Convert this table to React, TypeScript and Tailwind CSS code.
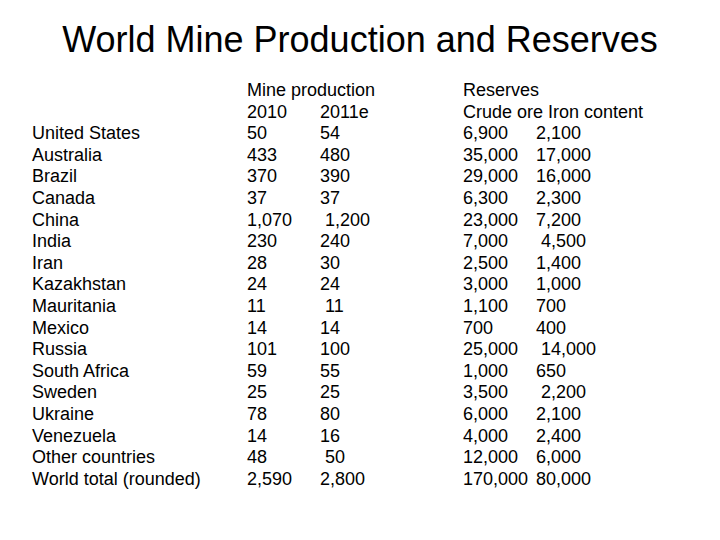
const countries = [
  "United States",
  "Australia",
  "Brazil",
  "Canada",
  "China",
  "India",
  "Iran",
  "Kazakhstan",
  "Mauritania",
  "Mexico",
  "Russia",
  "South Africa",
  "Sweden",
  "Ukraine",
  "Venezuela",
  "Other countries",
  "World total (rounded)",
];

// [2010, 2011e]  (leading spaces kept as in the slide)
const production: [string, string][] = [
  ["50", "54"],
  ["433", "480"],
  ["370", "390"],
  ["37", "37"],
  ["1,070", " 1,200"],
  ["230", "240"],
  ["28", "30"],
  ["24", "24"],
  ["11", " 11"],
  ["14", "14"],
  ["101", "100"],
  ["59", "55"],
  ["25", "25"],
  ["78", "80"],
  ["14", "16"],
  ["48", " 50"],
  ["2,590", "2,800"],
];

// [crude ore, iron content]
const reserves: [string, string][] = [
  ["6,900", "2,100"],
  ["35,000", "17,000"],
  ["29,000", "16,000"],
  ["6,300", "2,300"],
  ["23,000", "7,200"],
  ["7,000", " 4,500"],
  ["2,500", "1,400"],
  ["3,000", "1,000"],
  ["1,100", "700"],
  ["700", "400"],
  ["25,000", " 14,000"],
  ["1,000", "650"],
  ["3,500", " 2,200"],
  ["6,000", "2,100"],
  ["4,000", "2,400"],
  ["12,000", "6,000"],
  ["170,000", "80,000"],
];

function Pair({ a, b }: { a: string; b: string }) {
  return (
    <div className="flex whitespace-pre">
      <span className="w-[73px] shrink-0">{a}</span>
      <span>{b}</span>
    </div>
  );
}

export default function App() {
  return (
    <main
      className="w-[720px] h-[540px] bg-white text-black overflow-hidden"
      style={{ fontFamily: '"Liberation Sans", Arial, sans-serif' }}
    >
      <h1 className="pt-[22px] text-center text-[36px] leading-none">
        World Mine Production and Reserves
      </h1>

      <section className="flex pl-[32px] pt-[22px] text-[18px] leading-[21.6px]">
        {/* countries */}
        <div className="w-[215px] flex flex-col">
          <div className="h-[43.2px]" />
          {countries.map((c) => (
            <div key={c}>{c}</div>
          ))}
        </div>

        {/* mine production */}
        <div className="w-[216px] flex flex-col">
          <div>Mine production</div>
          <Pair a="2010" b="2011e" />
          {production.map(([a, b], i) => (
            <Pair key={i} a={a} b={b} />
          ))}
        </div>

        {/* reserves */}
        <div className="flex flex-col">
          <div>Reserves</div>
          <div>Crude ore Iron content</div>
          {reserves.map(([a, b], i) => (
            <Pair key={i} a={a} b={b} />
          ))}
        </div>
      </section>
    </main>
  );
}
